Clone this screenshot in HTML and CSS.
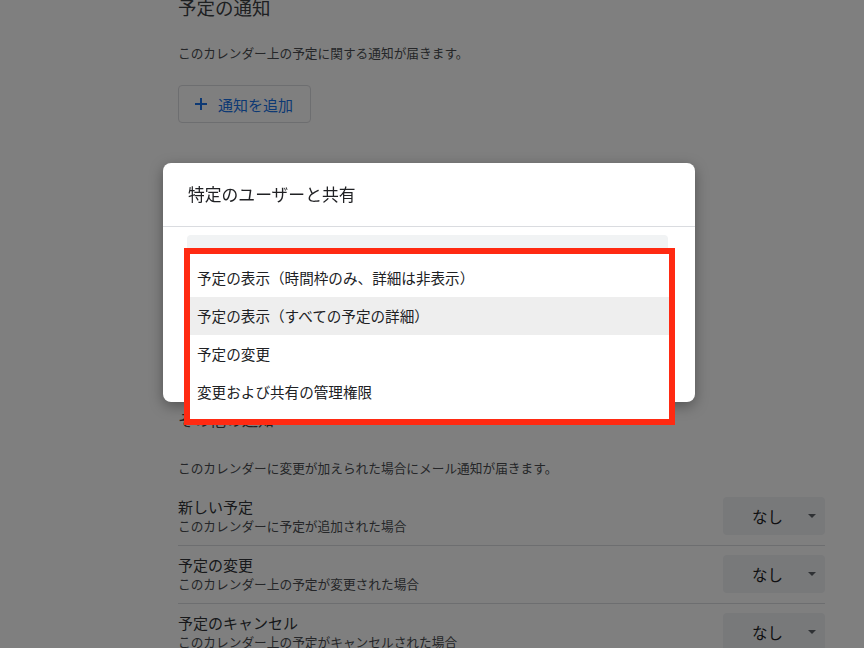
FILE: index.html
```html
<!DOCTYPE html>
<html lang="ja">
	<head>
		<meta charset="utf-8">
		<title>カレンダーの設定</title>
		<link rel="stylesheet" href="styles.css">
	</head>
	<body>
		<div class="page">
			<h2 class="section-title top">予定の通知</h2>
			<p class="section-desc first">このカレンダー上の予定に関する通知が届きます。</p>
			<div class="add-btn">
				<svg class="plus" width="14" height="14" viewBox="0 0 14 14"><path d="M7 1v12M1 7h12" stroke="#1a73e8" stroke-width="2" fill="none"/></svg>
				通知を追加
			</div>

			<h2 class="section-title other">その他の通知</h2>
			<p class="section-desc second">このカレンダーに変更が加えられた場合にメール通知が届きます。</p>

			<div class="notify-list">
				<div class="notify-row">
					<div class="row-text">
						<div class="row-title">新しい予定</div>
						<div class="row-sub">このカレンダーに予定が追加された場合</div>
					</div>
					<div class="select-box">なし<span class="caret"></span></div>
				</div>
				<div class="notify-row">
					<div class="row-text">
						<div class="row-title">予定の変更</div>
						<div class="row-sub">このカレンダー上の予定が変更された場合</div>
					</div>
					<div class="select-box">なし<span class="caret"></span></div>
				</div>
				<div class="notify-row">
					<div class="row-text">
						<div class="row-title">予定のキャンセル</div>
						<div class="row-sub">このカレンダー上の予定がキャンセルされた場合</div>
					</div>
					<div class="select-box">なし<span class="caret"></span></div>
				</div>
			</div>
		</div>

		<!-- ダイアログ背景 -->
		<div class="overlay"></div>

		<div class="dialog">
			<div class="dialog-head">特定のユーザーと共有</div>
			<div class="dialog-body">
				<div class="perm-field"></div>
			</div>

			<!-- 権限メニュー（赤枠で囲んだ部分） -->
			<div class="perm-menu">
				<div class="perm-item">予定の表示（時間枠のみ、詳細は非表示）</div>
				<div class="perm-item active">予定の表示（すべての予定の詳細）</div>
				<div class="perm-item">予定の変更</div>
				<div class="perm-item">変更および共有の管理権限</div>
			</div>
		</div>
	</body>
</html>
```

FILE: styles.css
```css
body{
	margin: 0;
	background: #fff;
	font-family: "Noto Sans CJK JP", "Noto Sans", sans-serif;
	color: #3c4043;
	overflow: hidden;
	height: 648px;
}

.page{
	padding: 0 39px 0 178px;
}

.section-title{
	font-size: 18.5px;
	font-weight: normal;
	line-height: 24px;
	margin: 0;
	color: #3c4043;
}

.section-title.top{
	margin-top: -5px;
}

/*その他の通知（ダイアログの下に隠れている）*/
.section-title.other{
	font-size: 16px;
	margin-top: 284px;
}

.section-desc{
	font-size: 12.7px;
	line-height: 20px;
	color: #4a4d51;
	margin: 0;
}

.section-desc.first{
	margin-top: 24px;
}

.section-desc.second{
	margin-top: 27px;
}

.add-btn{
	display: flex;
	align-items: center;
	margin-top: 22px;
	height: 36px;
	width: 131px;
	border: 1px solid #dadce0;
	border-radius: 4px;
	color: #1a73e8;
	font-size: 15px;
}

.plus{
	margin: 0 10px 0 15px;
}

/*通知の行*/
.notify-list{
	margin-top: 10px;
}

.notify-row{
	display: flex;
	align-items: center;
	justify-content: space-between;
	padding: 9px 0 10px 0;
	border-bottom: 1px solid #dadce0;
}

.row-title{
	font-size: 15px;
	line-height: 20px;
	color: #303336;
}

.row-sub{
	font-size: 12.7px;
	line-height: 18px;
	color: #4a4d51;
}

.select-box{
	position: relative;
	width: 102px;
	height: 38px;
	background: #f1f3f4;
	border-radius: 4px;
	font-size: 15.5px;
	line-height: 38px;
	padding-left: 29px;
	box-sizing: border-box;
	color: #202124;
}

.caret{
	position: absolute;
	right: 9px;
	top: 17px;
	border-left: 4px solid transparent;
	border-right: 4px solid transparent;
	border-top: 4px solid #5f6368;
}

.overlay{
	position: fixed;
	top: 0;
	left: 0;
	right: 0;
	bottom: 0;
	background: rgba(0,0,0,0.5);
}

/*ダイアログ*/
.dialog{
	position: absolute;
	left: 163px;
	top: 163px;
	width: 532px;
	height: 239px;
	background: #fff;
	border-radius: 8px;
	box-shadow: 0 4px 14px rgba(0,0,0,0.35);
}

.dialog-head{
	height: 63px;
	padding-left: 25px;
	font-size: 16.8px;
	line-height: 63px;
	color: #202124;
	border-bottom: 1px solid #dadce0;
}

.dialog-body{
	padding: 8px 27px 0 24px;
}

.perm-field{
	height: 40px;
	background: #f1f3f4;
	border-radius: 4px 4px 0 0;
}

.perm-menu{
	position: absolute;
	left: 21px;
	top: 85px;
	width: 491px;
	height: 177px;
	box-sizing: border-box;
	border: 6px solid #ff2a12;
	background: #fff;
	padding-top: 5px;
}

.perm-item{
	height: 38px;
	line-height: 38px;
	padding-left: 7px;
	font-size: 14.6px;
	color: #202124;
}

.perm-item.active{
	background: #eeeeee;
}
```
